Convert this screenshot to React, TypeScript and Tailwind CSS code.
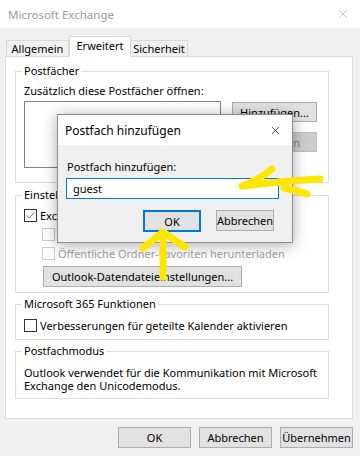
import { Check, X } from "lucide-react";

const FONT = "font-['Noto_Sans','Liberation_Sans',sans-serif]";

function WinButton({
  label,
  className = "",
  disabled = false,
  focused = false,
}: {
  label: string;
  className?: string;
  disabled?: boolean;
  focused?: boolean;
}) {
  const tone = disabled
    ? "bg-[#cccccc] border-[#bfbfbf] text-[#838383]"
    : focused
      ? "bg-[#e1e1e1] border-2 border-[#0078d7] text-black"
      : "bg-[#e1e1e1] border-[#adadad] text-black";
  return (
    <div className={`flex items-center justify-center border ${tone} ${className}`}>
      {label}
    </div>
  );
}

function CheckBox({ checked = false, disabled = false }: { checked?: boolean; disabled?: boolean }) {
  return (
    <div
      className={`w-[13px] h-[13px] shrink-0 border flex items-center justify-center ${
        disabled ? "border-[#cccccc] bg-white" : "border-[#333333] bg-white"
      }`}
    >
      {checked && <Check className="w-[11px] h-[11px] text-[#333333]" strokeWidth={1.6} />}
    </div>
  );
}

function Group({
  title,
  className = "",
  children,
}: {
  title: string;
  className?: string;
  children: React.ReactNode;
}) {
  return (
    <fieldset className={`w-[314px] border border-[#dcdcdc] px-[8px] ${className}`}>
      <legend className="ml-[-2px] px-[2px] leading-[16px]">{title}</legend>
      {children}
    </fieldset>
  );
}

export default function App() {
  return (
    <div
      className={`relative w-[360px] h-[456px] overflow-hidden bg-[#f0f0f0] text-[11px] leading-[13px] text-black ${FONT}`}
    >
      {/* title bar */}
      <div className="h-[28px] bg-white flex items-center justify-between pl-[8px] pr-[10px]">
        <span className="text-[11.5px] text-[#9a9a9a]">Microsoft Exchange</span>
        <X className="w-[14px] h-[14px] text-[#9a9a9a]" strokeWidth={1} />
      </div>

      {/* tabs */}
      <div className="flex items-end pl-[6px] mt-[8px] h-[20px]">
        <div className="w-[63px] h-[16px] flex items-center justify-center border border-b-0 border-[#d9d9d9] bg-[#f0f0f0]">
          Allgemein
        </div>
        <div className="relative z-10 w-[62px] h-[21px] -mb-px flex justify-center pt-[2px] border border-b-0 border-[#d9d9d9] bg-white">
          Erweitert
        </div>
        <div className="w-[57px] h-[16px] flex items-center justify-center border border-b-0 border-l-0 border-[#d9d9d9] bg-[#f0f0f0]">
          Sicherheit
        </div>
      </div>

      {/* tab panel */}
      <div className="ml-[5px] w-[348px] h-[363px] bg-white border border-[#d9d9d9] pl-[9px] pt-[6px]">
        <Group title="Postfächer" className="pb-[14px]">
          <div className="mt-[4px] leading-[16px]">Zusätzlich diese Postfächer öffnen:</div>
          <div className="flex mt-[2px]">
            <div className="w-[197px] h-[67px] border border-[#828282] bg-white" />
            <div className="ml-[11px] mt-[1px] flex flex-col gap-[10px]">
              <WinButton label="Hinzufügen..." className="w-[85px] h-[20px]" />
              <WinButton label="Entfernen" disabled className="w-[85px] h-[20px]" />
            </div>
          </div>
        </Group>

        <Group title="Einstellungen für Cache-Modus" className="mt-[4px] pb-[5px]">
          <div className="mt-[3px] flex flex-col">
            <div className="h-[19px] flex items-center gap-[3px]">
              <CheckBox checked />
              <span>Exchange-Cache-Modus verwenden</span>
            </div>
            <div className="h-[19px] flex items-center gap-[3px] pl-[18px] text-[#a0a0a0]">
              <CheckBox disabled />
              <span>Freigegebene Ordner herunterladen</span>
            </div>
            <div className="h-[19px] flex items-center gap-[3px] pl-[18px] text-[#a0a0a0]">
              <CheckBox disabled />
              <span>Öffentliche Ordner-Favoriten herunterladen</span>
            </div>
          </div>
          <WinButton
            label="Outlook-Datendateieinstellungen..."
            className="mt-[3px] ml-[19px] w-[199px] h-[21px]"
          />
        </Group>

        <Group title="Microsoft 365 Funktionen" className="mt-[3px] pb-[4px]">
          <div className="mt-[4px] h-[19px] flex items-center gap-[3px]">
            <CheckBox />
            <span>Verbesserungen für geteilte Kalender aktivieren</span>
          </div>
        </Group>

        <Group title="Postfachmodus" className="mt-[3px] pb-[6px]">
          <p className="mt-[7px]">
            Outlook verwendet für die Kommunikation mit Microsoft
            <br />
            Exchange den Unicodemodus.
          </p>
        </Group>
      </div>

      {/* dialog buttons */}
      <div className="flex justify-end gap-[8px] pr-[7px] mt-[8px]">
        <WinButton label="OK" className="w-[73px] h-[21px]" />
        <WinButton label="Abbrechen" className="w-[73px] h-[21px]" />
        <WinButton label="Übernehmen" className="w-[73px] h-[21px]" />
      </div>

      {/* modal: Postfach hinzufügen */}
      <div className="absolute left-[57px] top-[114px] w-[236px] h-[129px] bg-[#f0f0f0] border border-[#8c8c8c] shadow-[0_2px_14px_rgba(0,0,0,0.35)] flex flex-col">
        <div className="h-[30px] bg-white flex items-center justify-between pl-[7px] pr-[10px]">
          <span className="text-[12px]">Postfach hinzufügen</span>
          <X className="w-[13px] h-[13px] text-black" strokeWidth={1.2} />
        </div>
        <div className="px-[8px] pt-[14px]">
          <div className="ml-[1px] leading-[16px]">Postfach hinzufügen:</div>
          <div className="mt-[3px] w-[213px] h-[21px] bg-white border border-[#0078d7] flex items-center pl-[6px]">
            guest
          </div>
          <div className="mt-[11px] flex">
            <WinButton label="OK" focused className="ml-[77px] w-[58px] h-[22px]" />
            <WinButton label="Abbrechen" className="ml-[15px] w-[58px] h-[21px]" />
          </div>
        </div>
      </div>

      {/* yellow marker arrows */}
      <svg
        className="absolute inset-0 pointer-events-none"
        width="360"
        height="456"
        viewBox="0 0 360 456"
        fill="none"
        stroke="#ffe600"
        strokeWidth="7"
        strokeLinecap="round"
        strokeLinejoin="round"
      >
        <path d="M272 169 Q262 178 242 186 Q282 181 320 179" />
        <path d="M284 188 Q296 190 307 194" />
        <path d="M163 232 L163 277" />
        <path d="M143 248 L163 232 L185 247" />
      </svg>
    </div>
  );
}
